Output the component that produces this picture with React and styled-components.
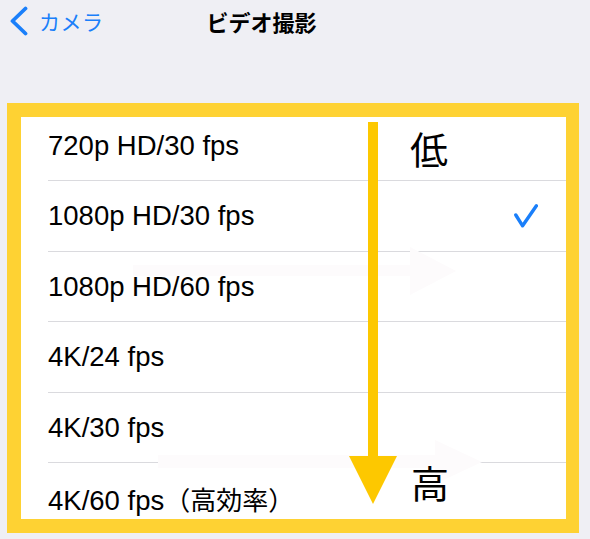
import React from "react";
import styled, { createGlobalStyle } from "styled-components";

const Global = createGlobalStyle`
  html, body { margin: 0; padding: 0; background: #efeff4; }
  body { font-family: "Liberation Sans", "Noto Sans CJK JP", sans-serif; }
`;

const Page = styled.div`
  width: 590px;
  height: 539px;
  overflow: hidden;
  background: #efeff4;
`;

const NavBar = styled.div`
  height: 44px;
  display: flex;
  align-items: flex-start;
  padding-top: 6px;
  box-sizing: border-box;
`;

const BackButton = styled.div`
  display: flex;
  align-items: center;
  gap: 10px;
  padding-left: 9px;
  color: #1a7ffa;
  font-family: "Noto Sans CJK JP", sans-serif;
  font-size: 21px;
  line-height: 30px;
  letter-spacing: 0.5px;
`;

const Title = styled.div`
  margin-left: 103px;
  font-family: "Noto Sans CJK JP", sans-serif;
  font-weight: 700;
  font-size: 22px;
  line-height: 30px;
  color: #000;
`;

const Frame = styled.div`
  position: relative;
  margin: 59px 11px 0 7px;
  border: 14px solid #fed233;
  border-right-width: 13px;
  background: #fff;
`;

const List = styled.div`
  height: 402px;
  overflow: hidden;
`;

const Rows = styled.div`
  margin-top: -6.5px;
`;

const Row = styled.div`
  height: 70.5px;
  box-sizing: border-box;
  margin-left: 27px;
  padding-right: 28px;
  display: flex;
  align-items: center;
  justify-content: space-between;
  border-bottom: ${(p) => (p.$last ? "none" : "1px solid #dadade")};
  font-size: 27.5px;
  color: #000;
`;

const Label = styled.span`
  padding-top: 1px;
`;

const Cjk = styled.span`
  font-family: "Noto Sans CJK JP", sans-serif;
  font-size: 26px;
`;

const Overlay = styled.svg`
  position: absolute;
  left: 0;
  top: 0;
  pointer-events: none;
`;

const Mark = styled.span`
  position: absolute;
  left: ${(p) => p.$x}px;
  top: ${(p) => p.$y}px;
  font-family: "Noto Sans CJK JP", sans-serif;
  font-size: 38px;
  line-height: 38px;
  color: #000;
`;

const Check = () => (
  <svg width="24" height="24" viewBox="0 0 24 24">
    <path
      d="M1.8 11 L8.6 21.8 L22.4 1.8"
      fill="none"
      stroke="#1a7ffa"
      strokeWidth="3.4"
      strokeLinecap="round"
      strokeLinejoin="round"
    />
  </svg>
);

const rows = [
  { label: "720p HD/30 fps" },
  { label: "1080p HD/30 fps", checked: true },
  { label: "1080p HD/60 fps" },
  { label: "4K/24 fps" },
  { label: "4K/30 fps" },
  { label: "4K/60 fps", cjk: "（高効率）" },
];

export default function App() {
  return (
    <Page>
      <Global />
      <NavBar>
        <BackButton>
          <svg width="20" height="30" viewBox="0 0 20 30">
            <path
              d="M16.5 2.5 L3.5 15 L16.5 27.5"
              fill="none"
              stroke="#1a7ffa"
              strokeWidth="3.8"
              strokeLinecap="round"
              strokeLinejoin="round"
            />
          </svg>
          <span>カメラ</span>
        </BackButton>
        <Title>ビデオ撮影</Title>
      </NavBar>
      <Frame>
        <List>
          <Rows>
            {rows.map((r, i) => (
              <Row key={r.label} $last={i === rows.length - 1}>
                <Label>
                  {r.label}
                  {r.cjk && <Cjk>{r.cjk}</Cjk>}
                </Label>
                {r.checked && <Check />}
              </Row>
            ))}
          </Rows>
        </List>
        <Overlay width="545" height="402" viewBox="0 0 545 402">
          <rect x="112" y="148" width="278" height="11" fill="#fdfbfc" />
          <polygon points="389,130 389,178 435,154" fill="#fdfbfc" />
          <rect x="137" y="338" width="278" height="13" fill="#fdfbfc" />
          <polygon points="414,323 414,367 461,345" fill="#fdfbfc" />
          <rect x="347" y="5" width="10" height="336" fill="#fdc800" />
          <polygon points="328,339 376,339 352,387" fill="#fdc800" />
        </Overlay>
        <Mark $x={389} $y={12}>低</Mark>
        <Mark $x={390} $y={346}>高</Mark>
      </Frame>
    </Page>
  );
}
